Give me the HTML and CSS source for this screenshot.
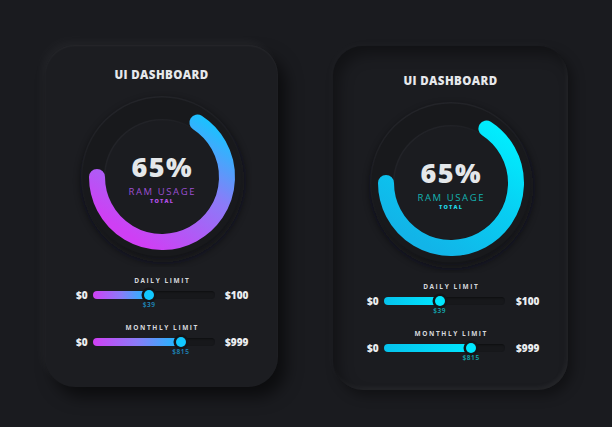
FILE: index.html
```html
<!DOCTYPE html>
<html lang="en">
<head>
<meta charset="utf-8">
<title>UI Dashboard</title>
<link rel="stylesheet" href="styles.css">
</head>
<body>
<main class="stage">
  <section class="card card--purple">
    <h1 class="title">UI DASHBOARD</h1>
    <div class="gauge">
      <svg class="gauge-svg" viewBox="0 0 180 180" width="180" height="180" aria-hidden="true">
        <defs>
          <linearGradient id="gP" gradientUnits="userSpaceOnUse" x1="140" y1="30" x2="60" y2="150">
            <stop offset="0" stop-color="#10c8ff"/>
            <stop offset="0.45" stop-color="#8a7cf8"/>
            <stop offset="1" stop-color="#cf3ff4"/>
          </linearGradient>
          <linearGradient id="rimP" x1="0" y1="0" x2="0.3" y2="1">
            <stop offset="0" stop-color="#26272c"/>
            <stop offset="0.5" stop-color="#1b1c20"/>
            <stop offset="1" stop-color="#141518"/>
          </linearGradient>
          <linearGradient id="innerP" x1="0" y1="0" x2="1" y2="1">
            <stop offset="0" stop-color="#26272c"/>
            <stop offset="0.5" stop-color="#1b1c20"/>
            <stop offset="1" stop-color="#131417"/>
          </linearGradient>
          <filter id="blurP" x="-20%" y="-20%" width="140%" height="140%">
            <feGaussianBlur stdDeviation="4"/>
          </filter>
        </defs>
        <circle cx="91" cy="94" r="81" fill="#0f1012" opacity="0.7" filter="url(#blurP)"/>
        <circle cx="90" cy="90" r="81" fill="url(#rimP)"/>
        <circle cx="90" cy="90" r="79.5" fill="#18191c"/>
        <circle cx="90" cy="90" r="58" fill="url(#innerP)"/>
        <circle cx="90" cy="90" r="56.5" fill="#1b1c20"/>
        <path d="M125.40 35.49 A65 65 0 1 1 25 90" fill="none" stroke="url(#gP)" stroke-width="16" stroke-linecap="round"/>
      </svg>
      <div class="readout">
        <div class="pct">65%</div>
        <div class="ram">RAM USAGE</div>
        <div class="total">TOTAL</div>
      </div>
    </div>
    <div class="limit limit--first">
      <div class="limit-label">DAILY LIMIT</div>
      <div class="limit-row">
        <span class="lo">$0</span>
        <div class="track">
          <div class="fill" style="width:46%"></div>
          <span class="knob" style="left:46%"></span>
          <span class="val" style="left:46%">$39</span>
        </div>
        <span class="hi">$100</span>
      </div>
    </div>
    <div class="limit">
      <div class="limit-label">MONTHLY LIMIT</div>
      <div class="limit-row">
        <span class="lo">$0</span>
        <div class="track">
          <div class="fill" style="width:72%"></div>
          <span class="knob" style="left:72%"></span>
          <span class="val" style="left:72%">$815</span>
        </div>
        <span class="hi">$999</span>
      </div>
    </div>
  </section>

  <section class="card card--cyan">
    <h1 class="title">UI DASHBOARD</h1>
    <div class="gauge">
      <svg class="gauge-svg" viewBox="0 0 180 180" width="180" height="180" aria-hidden="true">
        <defs>
          <linearGradient id="gC" gradientUnits="userSpaceOnUse" x1="140" y1="30" x2="60" y2="150">
            <stop offset="0" stop-color="#00f0ff"/>
            <stop offset="0.5" stop-color="#08cdf2"/>
            <stop offset="1" stop-color="#12b4e8"/>
          </linearGradient>
          <linearGradient id="rimC" x1="0" y1="0" x2="0.3" y2="1">
            <stop offset="0" stop-color="#26272c"/>
            <stop offset="0.5" stop-color="#1b1c20"/>
            <stop offset="1" stop-color="#141518"/>
          </linearGradient>
          <linearGradient id="innerC" x1="0" y1="0" x2="1" y2="1">
            <stop offset="0" stop-color="#26272c"/>
            <stop offset="0.5" stop-color="#1b1c20"/>
            <stop offset="1" stop-color="#131417"/>
          </linearGradient>
          <filter id="blurC" x="-20%" y="-20%" width="140%" height="140%">
            <feGaussianBlur stdDeviation="4"/>
          </filter>
        </defs>
        <circle cx="91" cy="94" r="81" fill="#0f1012" opacity="0.7" filter="url(#blurC)"/>
        <circle cx="90" cy="90" r="81" fill="url(#rimC)"/>
        <circle cx="90" cy="90" r="79.5" fill="#18191c"/>
        <circle cx="90" cy="90" r="58" fill="url(#innerC)"/>
        <circle cx="90" cy="90" r="56.5" fill="#1b1c20"/>
        <path d="M125.40 35.49 A65 65 0 1 1 25 90" fill="none" stroke="url(#gC)" stroke-width="16" stroke-linecap="round"/>
      </svg>
      <div class="readout">
        <div class="pct">65%</div>
        <div class="ram">RAM USAGE</div>
        <div class="total">TOTAL</div>
      </div>
    </div>
    <div class="limit limit--first">
      <div class="limit-label">DAILY LIMIT</div>
      <div class="limit-row">
        <span class="lo">$0</span>
        <div class="track">
          <div class="fill" style="width:46%"></div>
          <span class="knob" style="left:46%"></span>
          <span class="val" style="left:46%">$39</span>
        </div>
        <span class="hi">$100</span>
      </div>
    </div>
    <div class="limit">
      <div class="limit-label">MONTHLY LIMIT</div>
      <div class="limit-row">
        <span class="lo">$0</span>
        <div class="track">
          <div class="fill" style="width:72%"></div>
          <span class="knob" style="left:72%"></span>
          <span class="val" style="left:72%">$815</span>
        </div>
        <span class="hi">$999</span>
      </div>
    </div>
  </section>
</main>
</body>
</html>
```

FILE: styles.css
```css
* { box-sizing: border-box; }

html, body {
  margin: 0;
  padding: 0;
  width: 612px;
  height: 427px;
  overflow: hidden;
  background: #1a1b1f;
  font-family: "Open Sans", "Liberation Sans", sans-serif;
}

.stage {
  display: flex;
  align-items: flex-start;
  gap: 55px;
  padding: 45px 0 0 45px;
}

.card {
  position: relative;
  width: 233px;
  height: 342px;
  border-radius: 30px;
  background: #1c1d21;
  display: flex;
  flex-direction: column;
  align-items: center;
  padding-top: 23px;
}

.card--purple {
  box-shadow:
    -4px -5px 10px rgba(255, 255, 255, 0.035),
    8px 10px 16px rgba(0, 0, 0, 0.55),
    inset 0 1px 2px rgba(255, 255, 255, 0.05);
}

.card--cyan {
  width: 235px;
  height: 344px;
  margin-top: 1px;
  padding-top: 28px;
  background: #1b1c20;
  box-shadow:
    inset 6px 8px 14px rgba(0, 0, 0, 0.35),
    inset -2px -3px 4px rgba(255, 255, 255, 0.045),
    -3px -3px 8px rgba(255, 255, 255, 0.02),
    5px 6px 12px rgba(0, 0, 0, 0.35);
}

.title {
  margin: 0;
  font-size: 11.5px;
  line-height: 14px;
  font-weight: 800;
  letter-spacing: 0.4px;
  color: #e6e8eb;
}

.gauge {
  display: grid;
  place-items: center;
  margin-top: 5px;
  width: 180px;
  height: 180px;
}

.gauge-svg,
.readout {
  grid-area: 1 / 1;
}

.readout {
  display: flex;
  flex-direction: column;
  align-items: center;
  margin-top: 6px;
}

.pct {
  font-size: 27px;
  line-height: 22px;
  font-weight: 800;
  letter-spacing: 1.5px;
  padding-left: 1.5px;
  color: #e4e7ea;
}

.ram {
  margin-top: 9px;
  font-size: 9.5px;
  line-height: 10px;
  font-weight: 400;
  letter-spacing: 1.6px;
  padding-left: 1.6px;
}

.total {
  margin-top: 1px;
  font-size: 5.5px;
  line-height: 7px;
  font-weight: 800;
  letter-spacing: 1.2px;
  padding-left: 1.2px;
}

.card--purple .ram { color: #9b4fd2; }
.card--purple .total { color: #b850ec; }
.card--cyan .ram { color: #14b3b0; }
.card--cyan .total { color: #20d8e6; }

.limit {
  display: flex;
  flex-direction: column;
  align-items: center;
  margin-top: 23px;
  width: 100%;
}

.limit--first { margin-top: 10px; }

.limit-label {
  font-size: 6.5px;
  line-height: 8px;
  font-weight: 700;
  letter-spacing: 1.6px;
  padding-left: 1.6px;
  color: #d6d8dc;
}

.limit-row {
  display: flex;
  align-items: center;
  align-self: flex-start;
  margin-top: 4px;
  height: 12px;
  padding-left: 31px;
}

.card--cyan .limit-row { padding-left: 34px; }

.lo, .hi {
  font-size: 10px;
  line-height: 12px;
  font-weight: 800;
  color: #eceef0;
}

.lo { width: 13px; margin-right: 4px; }
.hi { margin-left: 10px; }
.card--cyan .hi { margin-left: 11px; }

.track {
  position: relative;
  width: 122px;
  height: 8px;
  border-radius: 4px;
  background: #17181b;
  box-shadow: inset 1px 1px 2px rgba(0, 0, 0, 0.45);
}

.card--cyan .track { width: 121px; }

.fill {
  height: 8px;
  border-radius: 4px;
}

.card--purple .fill { background: linear-gradient(90deg, #d040f4, #8a7cf8 50%, #18bdff); }
.card--cyan .fill { background: linear-gradient(90deg, #06c2ec, #00e6ff); }

.knob {
  position: absolute;
  top: 50%;
  width: 10px;
  height: 10px;
  margin: -5px 0 0 -5px;
  border-radius: 50%;
  box-shadow: 0 0 0 2.5px #141518;
}

.card--purple .knob { background: #12c8ff; }
.card--cyan .knob { background: #00e8ff; }

.val {
  position: absolute;
  top: 10px;
  transform: translateX(-50%);
  font-size: 6.5px;
  line-height: 8px;
  font-weight: 600;
  letter-spacing: 0.6px;
  white-space: nowrap;
}

.card--purple .val { color: #1d8ec2; }
.card--cyan .val { color: #13aeb6; }
```
